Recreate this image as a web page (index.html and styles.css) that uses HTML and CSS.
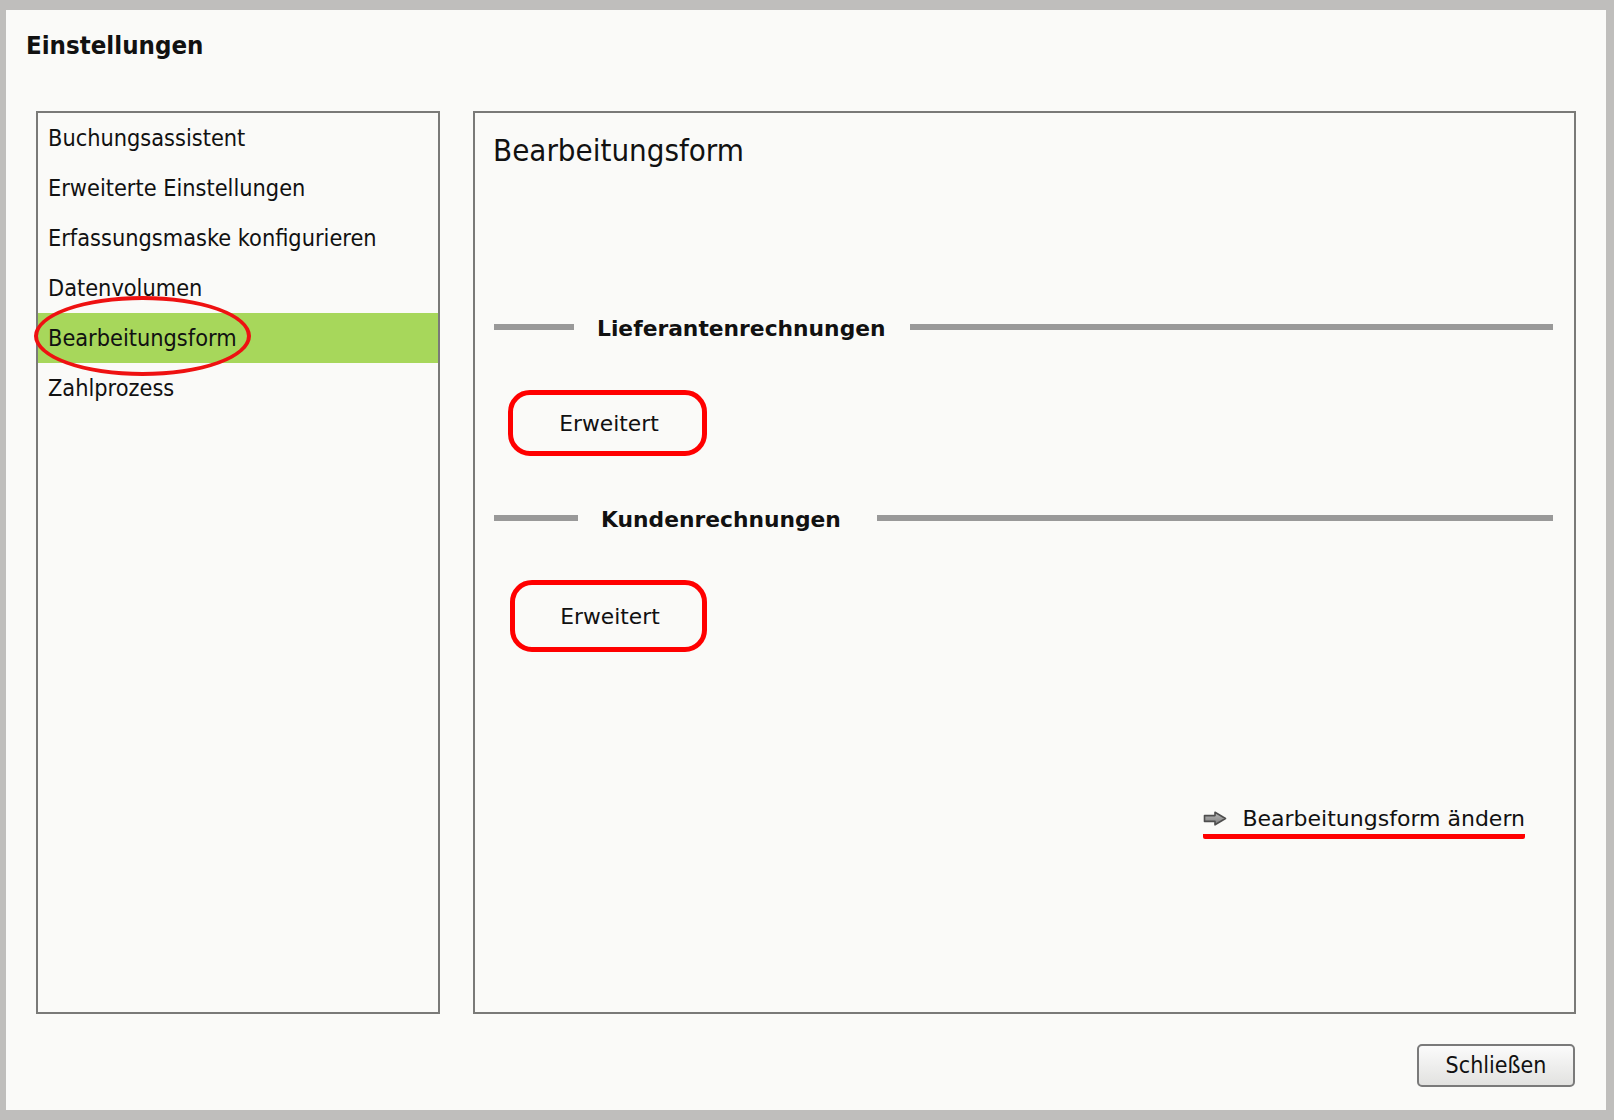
FILE: index.html
```html
<!DOCTYPE html>
<html lang="de">
<head>
<meta charset="utf-8">
<title>Einstellungen</title>
<link rel="stylesheet" href="styles.css">
</head>
<body>
<div class="window">
  <h1 class="title">Einstellungen</h1>
  <div class="panels">
    <div class="sidebar">
      <div class="nav-item">Buchungsassistent</div>
      <div class="nav-item">Erweiterte Einstellungen</div>
      <div class="nav-item">Erfassungsmaske konfigurieren</div>
      <div class="nav-item">Datenvolumen</div>
      <div class="nav-item nav-item-active">Bearbeitungsform</div>
      <div class="nav-item">Zahlprozess</div>
      <div class="mark-ellipse"></div>
    </div>
    <div class="content">
      <h2 class="heading">Bearbeitungsform</h2>
      <div class="section section-first">
        <span class="sec-line sec-line-left"></span>
        <span class="sec-title">Lieferantenrechnungen</span>
        <span class="sec-line sec-line-right"></span>
      </div>
      <div class="option option-first">Erweitert</div>
      <div class="section section-second">
        <span class="sec-line sec-line-left"></span>
        <span class="sec-title">Kundenrechnungen</span>
        <span class="sec-line sec-line-right"></span>
      </div>
      <div class="option option-second">Erweitert</div>
      <div class="link-row">
        <span class="link">
          <svg class="arrow" width="24" height="15" viewBox="0 0 24 15" aria-hidden="true">
            <defs>
              <linearGradient id="ag" x1="0" y1="0" x2="0" y2="1">
                <stop offset="0" stop-color="#b8b8b8"/>
                <stop offset="1" stop-color="#7e7e7e"/>
              </linearGradient>
            </defs>
            <path d="M1.5 4.6 H12 V1.2 L22.5 7.5 L12 13.8 V10.4 H1.5 Z" fill="url(#ag)" stroke="#4e4e4e" stroke-width="1.6" stroke-linejoin="round"/>
          </svg>
          <span class="link-text">Bearbeitungsform ändern</span>
        </span>
      </div>
    </div>
  </div>
  <div class="footer">
    <button class="close-btn" type="button">Schließen</button>
  </div>
</div>
</body>
</html>
```
FILE: styles.css
```css
html, body {
  margin: 0;
  padding: 0;
}

body {
  background: #bfbebc;
  width: 1614px;
  height: 1120px;
  overflow: hidden;
}

.window {
  box-sizing: border-box;
  margin: 10px 0 0 6px;
  width: 1600px;
  height: 1100px;
  background: #fafaf8;
  padding: 20px 30px 0 30px;
  color: #111;
  font-family: "DejaVu Sans", Verdana, sans-serif;
}

.title {
  margin: 0 0 0 -10px;
  font-family: "DejaVu Sans Condensed", "DejaVu Sans", sans-serif;
  font-weight: bold;
  font-size: 25.6px;
  line-height: 30px;
  height: 30px;
}

.panels {
  display: flex;
  gap: 33px;
  margin-top: 51px;
  height: 903px;
}

.sidebar {
  position: relative;
  box-sizing: border-box;
  width: 404px;
  height: 903px;
  border: 2px solid #7a7a78;
  background: #fafaf8;
}

.nav-item {
  box-sizing: border-box;
  height: 50px;
  line-height: 49px;
  padding-left: 10px;
  font-family: "DejaVu Sans Condensed", "DejaVu Sans", sans-serif;
  font-size: 23.3px;
  color: #111;
  white-space: nowrap;
}

.nav-item-active {
  background: #a7d75b;
}

.mark-ellipse {
  position: absolute;
  box-sizing: border-box;
  left: -4px;
  top: 183px;
  width: 217px;
  height: 80px;
  border: 4px solid #ee1111;
  border-radius: 50%;
}

.content {
  box-sizing: border-box;
  width: 1103px;
  height: 903px;
  border: 2px solid #7a7a78;
  padding: 17px 21px 0 19px;
  display: flex;
  flex-direction: column;
}

.heading {
  margin: 0 0 0 -1px;
  font-family: "DejaVu Sans Condensed", "DejaVu Sans", sans-serif;
  font-weight: normal;
  font-size: 31px;
  line-height: 40px;
  height: 40px;
}

.section {
  display: flex;
  align-items: center;
  height: 30px;
}

.section-first {
  margin-top: 144px;
}

.section-second {
  margin-top: 49px;
}

.sec-line {
  display: block;
  height: 6px;
  background: #999999;
  margin-bottom: 5px;
}

.sec-line-right {
  flex: 1;
}

.section-first .sec-line-left {
  width: 80px;
}

.section-first .sec-title {
  margin-left: 23px;
}

.section-first .sec-line-right {
  margin-left: 24px;
}

.section-second .sec-line-left {
  width: 84px;
}

.section-second .sec-title {
  margin-left: 23px;
}

.section-second .sec-line-right {
  margin-left: 36px;
}

.sec-title {
  font-weight: bold;
  font-size: 21.8px;
  line-height: 30px;
  white-space: nowrap;
}

.option {
  box-sizing: border-box;
  display: flex;
  align-items: center;
  justify-content: center;
  border: 5px solid #ff0000;
  border-radius: 22px;
  font-size: 21.8px;
  padding-left: 3px;
}

.option-first {
  margin: 46px 0 0 14px;
  width: 199px;
  height: 66px;
}

.option-second {
  margin: 45px 0 0 16px;
  width: 197px;
  height: 72px;
}

.link-row {
  display: flex;
  justify-content: flex-end;
  margin-top: 154px;
  padding-right: 28px;
}

.link {
  display: inline-flex;
  align-items: center;
  gap: 15px;
  padding-bottom: 3px;
  border-bottom: 5px solid #ff0000;
  border-radius: 0 0 2px 2px;
}

.arrow {
  display: block;
  filter: blur(0.5px);
}

.link-text {
  font-size: 22px;
  line-height: 25px;
  white-space: nowrap;
}

.footer {
  display: flex;
  justify-content: flex-end;
  margin-top: 30px;
  padding-right: 1px;
}

.close-btn {
  box-sizing: border-box;
  width: 158px;
  height: 43px;
  border: 2px solid #7a7a7a;
  border-radius: 5px;
  background: linear-gradient(#fbfbfb, #e2e2e0);
  font-family: "DejaVu Sans Condensed", "DejaVu Sans", sans-serif;
  font-size: 23px;
  color: #111;
  padding: 0;
  line-height: 1;
}
```
